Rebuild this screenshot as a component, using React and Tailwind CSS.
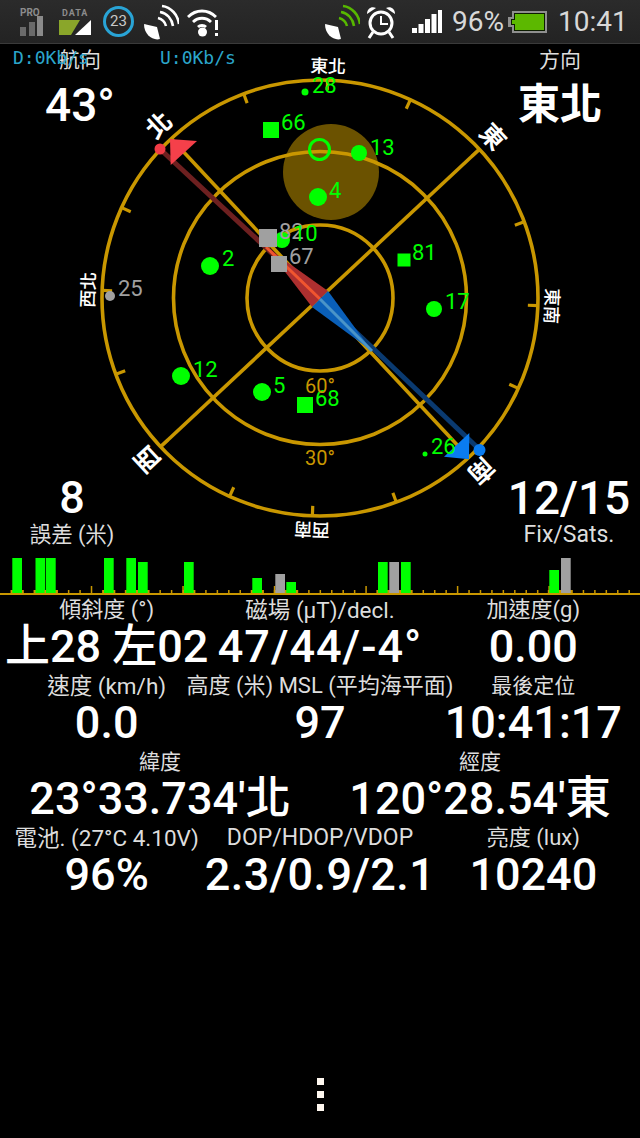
const sats = [
    { type: 'dot', x: 305, y: 92, size: 3.5, label: '28', lx: 312, ly: 85 },
    { type: 'square', x: 271, y: 130, size: 16, label: '66', lx: 281, ly: 122 },
    { type: 'dot', x: 359, y: 153, size: 8, label: '13', lx: 370, ly: 147 },
    { type: 'dot', x: 318, y: 197, size: 9, label: '4', lx: 329, ly: 190 },
    { type: 'dot', x: 282, y: 240, size: 8, label: '10', lx: 293, ly: 233 },
    { type: 'dot', x: 210, y: 266, size: 9, label: '2', lx: 222, ly: 258 },
    { type: 'square', x: 404, y: 260, size: 13, label: '81', lx: 412, ly: 252 },
    { type: 'dot', x: 434, y: 309, size: 8, label: '17', lx: 445, ly: 301 },
    { type: 'dot', x: 181, y: 376, size: 9, label: '12', lx: 193, ly: 369 },
    { type: 'dot', x: 262, y: 392, size: 9, label: '5', lx: 273, ly: 385 },
    { type: 'square', x: 305, y: 405, size: 16, label: '68', lx: 315, ly: 398 },
    { type: 'dot', x: 425, y: 454, size: 2.5, label: '26', lx: 431, ly: 446 },
];

const graySats = [
    { type: 'square', x: 268, y: 238, size: 18, label: '82', lx: 279, ly: 231 },
    { type: 'square', x: 279, y: 264, size: 16, label: '67', lx: 289, ly: 256 },
    { type: 'dot', x: 110, y: 296, size: 5, label: '25', lx: 118, ly: 288 },
];

const headings = [
    { a: -43, text: '北', r: 236, big: true },
    { a: 2, text: '東北', r: 232 },
    { a: 47, text: '東', r: 236, big: true },
    { a: 92, text: '東南', r: 232 },
    { a: 137, text: '南', r: 236, big: true },
    { a: 182, text: '西南', r: 232 },
    { a: 227, text: '西', r: 236, big: true },
    { a: 272, text: '西北', r: 232 },
];

const bars = [
    { x: 12.3, top: 558 }, { x: 35.5, top: 558 }, { x: 46, top: 558 }, { x: 104, top: 558 },
    { x: 126.3, top: 558 }, { x: 138, top: 562 }, { x: 184, top: 562 }, { x: 252.3, top: 578 },
    { x: 275.3, top: 574, gray: true }, { x: 286.3, top: 582 }, { x: 378, top: 562 },
    { x: 389.3, top: 562, gray: true }, { x: 401, top: 562 }, { x: 549.3, top: 570 },
    { x: 561, top: 558, gray: true },
];

const rows = [
    {
        cols: 3,
        items: [
            { label: '傾斜度 (°)', value: '上28 左02' },
            { label: '磁場 (µT)/decl.', value: '47/44/-4°', labelSize: 'text-[22.5px]', valueClass: 'tracking-[1px]' },
            { label: '加速度(g)', value: '0.00' },
        ],
    },
    {
        cols: 3,
        items: [
            { label: '速度 (km/h)', value: '0.0', labelSize: 'text-[22.5px]' },
            { label: '高度 (米) MSL (平均海平面)', value: '97' },
            { label: '最後定位', value: '10:41:17', labelSize: 'text-[21px]' },
        ],
    },
    {
        cols: 2,
        items: [
            { label: '緯度', value: '23°33.734′北', labelSize: 'text-[21px]' },
            { label: '經度', value: '120°28.54′東', labelSize: 'text-[21px]' },
        ],
    },
    {
        cols: 3,
        items: [
            { label: '電池. (27°C 4.10V)', value: '96%', labelSize: 'text-[22.5px]' },
            { label: 'DOP/HDOP/VDOP', value: '2.3/0.9/2.1', labelSize: 'text-[23px]', valueClass: 'tracking-[0.4px]' },
            { label: '亮度 (lux)', value: '10240' },
        ],
    },
];

function Dish({ arcs = 'white', className }) {
    return (
        <svg width="36" height="36" viewBox="0 0 36 36" className={className}>
            <path d="M1 20 C5 22 14 30 17 35 C10 37 1 31 1 20Z" fill="white" />
            <path d="M1 20 L14 23 L17 35Z" fill="white" />
            <g fill="none" stroke={arcs} strokeWidth="2.6">
                <path d="M15 14 C19 15 22 18 23 22" />
                <path d="M17 8 C24 9 29 15 30 22" />
                <path d="M19 2 C28 3 35 11 36 20" />
            </g>
        </svg>
    );
}

function StatusBar() {
    return (
        <div className="flex h-[44px] items-center border-b border-[#3a3a3a] bg-gradient-to-b from-[#2b2b2b] to-[#232323] font-['Roboto',sans-serif] text-[#d8d8d8]">
            <svg width="26" height="30" viewBox="0 0 26 30" className="ml-[19px]">
                <text x="1" y="9" className="fill-[#8c8c8c] text-[10px] font-bold">PRO</text>
                <rect x="1" y="20" width="6" height="9" fill="#6a6a6a" />
                <rect x="10" y="15" width="6" height="14" fill="#6a6a6a" />
                <rect x="18" y="9" width="6" height="20" fill="#8a8a8a" />
            </svg>
            <svg width="34" height="30" viewBox="0 0 34 30" className="ml-[14px]">
                <text x="3" y="9" className="fill-[#8c8c8c] text-[9px] font-bold tracking-[1px]">DATA</text>
                <path d="M0 13 H21 L12 28 H0Z" fill="#8aa62a" />
                <path d="M16 28 L32 13 V28Z" fill="white" />
            </svg>
            <div className="ml-[10px] flex h-[31px] w-[31px] items-center justify-center rounded-full border-[3px] border-[#29a4d6] text-[15px] text-[#c8c8c8]">23</div>
            <Dish className="ml-[9px]" />
            <svg width="34" height="32" viewBox="0 0 34 32" className="ml-[8px]">
                <g fill="none" stroke="white" strokeWidth="2.8">
                    <path d="M1 11 C9 3 21 3 29 11" />
                    <path d="M6 16 C11 11 19 11 24 16" />
                    <path d="M11 21 C13 19 17 19 19 21" />
                </g>
                <circle cx="15.5" cy="26" r="4.5" fill="white" />
                <rect x="28" y="14" width="3" height="10" fill="white" />
                <rect x="28" y="27" width="3" height="3" fill="white" />
            </svg>
            <Dish arcs="#57b800" className="ml-[103px]" />
            <svg width="32" height="34" viewBox="0 0 32 34" className="ml-[5px]">
                <circle cx="16" cy="18" r="11" fill="none" stroke="white" strokeWidth="3" />
                <path d="M16 11 V19 H23" fill="none" stroke="white" strokeWidth="2" />
                <path d="M2 9 C2 3 7 1 11 3Z" fill="white" />
                <path d="M30 9 C30 3 25 1 21 3Z" fill="white" />
                <path d="M8 27 L4 33 M24 27 L28 33" stroke="white" strokeWidth="3" />
            </svg>
            <svg width="30" height="24" viewBox="0 0 30 24" className="ml-[15px]">
                <rect x="0" y="18" width="5" height="5" fill="white" />
                <rect x="6.5" y="14" width="5" height="9" fill="white" />
                <rect x="13" y="9" width="5" height="14" fill="white" />
                <rect x="19.5" y="4" width="5" height="19" fill="white" />
                <rect x="26" y="0" width="4" height="23" fill="white" />
            </svg>
            <span className="ml-[10px] text-[28px] leading-none">96%</span>
            <svg width="40" height="24" viewBox="0 0 40 24" className="ml-[4px]">
                <path d="M4 1 H39 V23 H4 V17 H0 V7 H4Z" fill="#8f8f8f" />
                <path d="M6 3 H37 V21 H6 V15 H3 V9 H6Z" fill="#0c1c00" />
                <path d="M7 4 H36 V20 H7 V14 H4 V10 H7Z" fill="#5cb800" />
            </svg>
            <span className="ml-[10px] text-[28px] leading-none">10:41</span>
        </div>
    );
}

function SatMark({ sat, fill }) {
    return sat.type === 'dot' ? (
        <circle cx={sat.x} cy={sat.y} r={sat.size} fill={fill} />
    ) : (
        <rect x={sat.x - sat.size / 2} y={sat.y - sat.size / 2} width={sat.size} height={sat.size} fill={fill} />
    );
}

function SatLabel({ sat, fill }) {
    return (
        <text x={sat.lx} y={sat.ly} dominantBaseline="central" fill={fill} className="text-[22px]">
            {sat.label}
        </text>
    );
}

function Compass() {
    const gold = '#c99700';
    const ticks = [];
    for (let i = 0; i < 16; i++) ticks.push(-43 + i * 22.5);

    return (
        <svg viewBox="0 44 640 508" className="absolute inset-0 h-[508px] w-[640px] font-['Roboto','Noto_Sans_CJK_TC',sans-serif]">
            <circle cx="331" cy="172" r="48" fill="#6b5200" />
            <g fill="none" stroke={gold} strokeWidth="3.6">
                <circle cx="320" cy="298" r="218" />
                <circle cx="320" cy="298" r="146.5" />
                <circle cx="320" cy="298" r="73" />
                <path d="M479.4 149.3 L160.6 446.7" />
                <path d="M179 147 L461 449" />
            </g>
            {ticks.map((a) => (
                <path key={a} d="M320 80 V90" stroke={gold} strokeWidth="3.2" transform={`rotate(${a} 320 298)`} />
            ))}
            {headings.map((h) => (
                <g key={h.a} transform={`rotate(${h.a} 320 298)`}>
                    <text
                        x="320"
                        y={298 - h.r}
                        textAnchor="middle"
                        dominantBaseline="central"
                        fill="white"
                        className={h.big ? 'text-[25px] font-bold' : 'text-[18px] font-medium'}
                    >
                        {h.text}
                    </text>
                </g>
            ))}

            <path d="M160 149 L320 298" stroke="#6e2020" strokeWidth="5" />
            <path d="M320 298 L480 450" stroke="#0a3a70" strokeWidth="5" />
            <circle cx="160" cy="149" r="5.5" fill="#f23c46" />
            <path d="M170 139 L197 141 L170.7 165Z" fill="#f5404a" />
            <circle cx="479.5" cy="450" r="6" fill="#0a7cf0" />
            <path d="M469.3 433 L444 456.7 L469 459.3Z" fill="#0a7cf0" />

            <path d="M266 247 L328 291 L312 307Z" fill="#ad2f2f" />
            <path d="M266 247 L320 299" stroke="#f0552f" strokeWidth="3" />
            <path d="M372 351 L328 291 L312 307Z" fill="#0a5fb8" />
            <path d="M372 351 L320 299" stroke="#4a94c8" strokeWidth="3" />

            <circle cx="319.5" cy="149.5" r="10" fill="none" stroke="#00ff00" strokeWidth="3" />
            {sats.map((s) => (
                <SatMark key={s.label} sat={s} fill="#00ff00" />
            ))}
            {graySats.map((s) => (
                <g key={s.label}>
                    <SatMark sat={s} fill="#a0a0a0" />
                    <SatLabel sat={s} fill="#a0a0a0" />
                </g>
            ))}
            {sats.map((s) => (
                <SatLabel key={s.label} sat={s} fill="#00ff00" />
            ))}
            <text x="320" y="386" textAnchor="middle" dominantBaseline="central" fill={gold} className="text-[20px]">60°</text>
            <text x="320" y="458" textAnchor="middle" dominantBaseline="central" fill={gold} className="text-[20px]">30°</text>
        </svg>
    );
}

function BarChart() {
    const ticks = [];
    for (let i = 1; i < 56; i++) ticks.push(i);

    return (
        <svg viewBox="0 552 640 44" className="block h-[44px] w-[640px]">
            <rect x="0" y="593" width="640" height="2" fill="#c99700" />
            {ticks.map((i) => (
                <rect
                    key={i}
                    x={i * 11.44 - 0.75}
                    y={i % 8 === 0 ? 586 : 590}
                    width="1.5"
                    height={i % 8 === 0 ? 7 : 3}
                    fill="#c99700"
                />
            ))}
            {bars.map((b) => (
                <g key={b.x}>
                    <rect x={b.x - 1.5} y="590" width="12.7" height="3" fill="#c99700" />
                    <rect x={b.x} y={b.top} width="9.7" height={593 - b.top} fill={b.gray ? '#a0a0a0' : '#00ff00'} />
                </g>
            ))}
        </svg>
    );
}

export default function App() {
    return (
        <div className="flex h-[1138px] w-[640px] flex-col bg-black font-['Roboto','Noto_Sans_CJK_TC',sans-serif] text-white">
            <StatusBar />

            <div className="relative flex h-[508px] flex-col">
                <Compass />
                <div className="relative flex justify-between">
                    <div className="flex w-40 flex-col items-center">
                        <span className="h-[31px] text-[21px] leading-[32px] text-[#dddddd]">航向</span>
                        <span className="text-[46px] leading-[60px] font-medium">43°</span>
                    </div>
                    <div className="flex w-40 flex-col items-center">
                        <span className="h-[31px] text-[21px] leading-[32px] text-[#dddddd]">方向</span>
                        <span className="text-[42px] leading-[60px] font-bold">東北</span>
                    </div>
                </div>
                <div className="relative mt-auto mb-[3px] flex justify-between">
                    <div className="flex w-[144px] flex-col items-center">
                        <span className="text-[45px] leading-[46px] font-medium">8</span>
                        <span className="h-[28px] text-[21.5px] leading-[28px] text-[#dddddd]">誤差 (米)</span>
                    </div>
                    <div className="flex w-[142px] flex-col items-center">
                        <span className="text-[46px] leading-[46px] font-medium">12/15</span>
                        <span className="h-[28px] text-[23px] leading-[28px] text-[#dddddd]">Fix/Sats.</span>
                    </div>
                </div>
                <div className="absolute top-[3px] left-[13px] flex font-['DejaVu_Sans_Mono',monospace] text-[18px] leading-[22px] text-[#2ba6cb]">
                    <span className="w-[147px]">D:0Kb/s</span>
                    <span>U:0Kb/s</span>
                </div>
            </div>

            <BarChart />

            <div className="mt-[-1px] flex flex-col">
                {rows.map((row) => (
                    <div key={row.items[0].label} className={row.cols === 3 ? 'grid h-[76px] grid-cols-3' : 'grid h-[76px] grid-cols-2'}>
                        {row.items.map((item) => (
                            <div key={item.label} className="flex flex-col items-center whitespace-nowrap">
                                <span className={`h-7 leading-[30px] text-[#dddddd] ${item.labelSize || 'text-[22px]'}`}>{item.label}</span>
                                <span className={`h-12 text-[45px] leading-[48px] font-medium ${item.valueClass || ''}`}>{item.value}</span>
                            </div>
                        ))}
                    </div>
                ))}
            </div>

            <div className="mt-auto mb-[27px] flex flex-col items-center gap-[6px]">
                <div className="h-[7px] w-[7px] bg-[#fff8f0]" />
                <div className="h-[7px] w-[7px] bg-[#fff8f0]" />
                <div className="h-[7px] w-[7px] bg-[#fff8f0]" />
            </div>
        </div>
    );
}
